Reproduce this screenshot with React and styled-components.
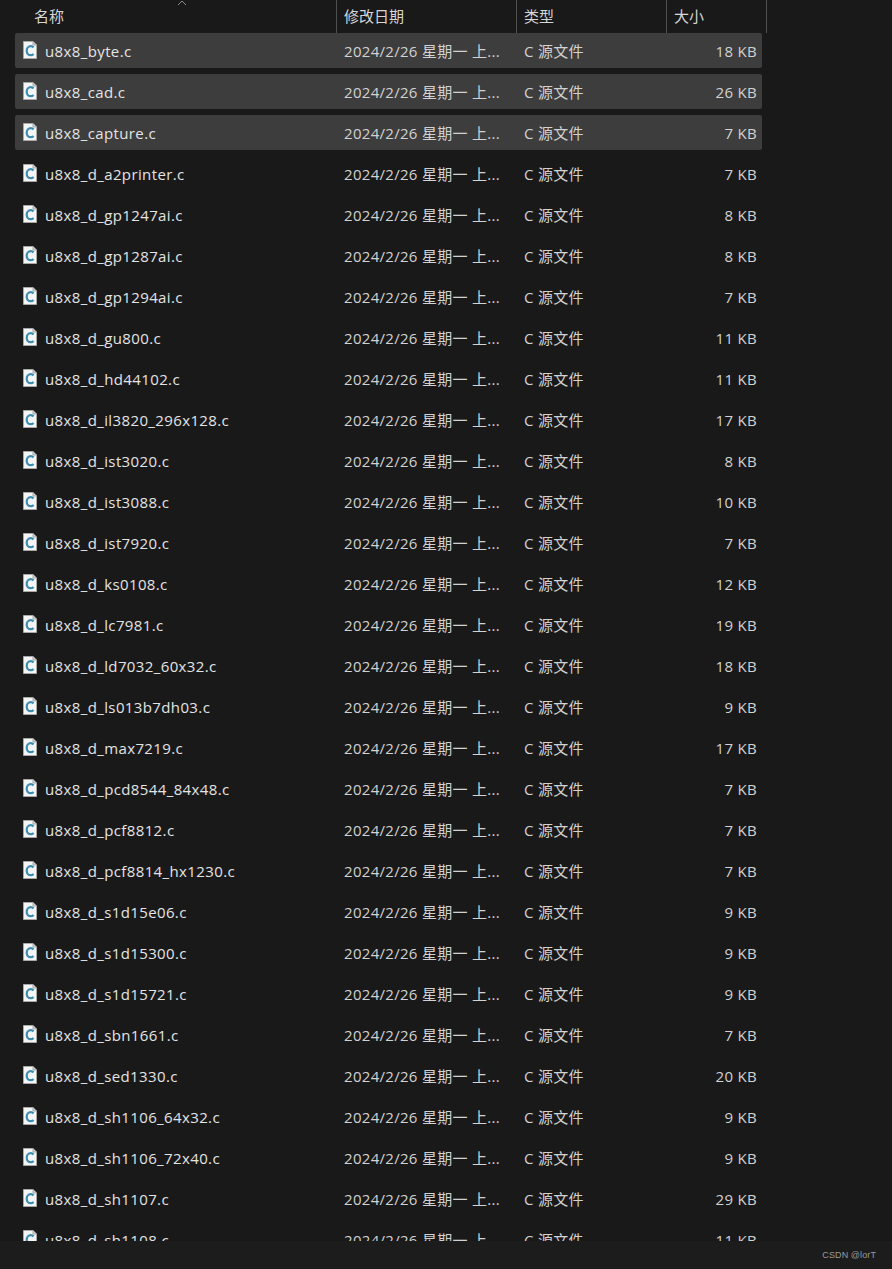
import React from "react";
import styled, { createGlobalStyle } from "styled-components";

const files = [
  ["u8x8_byte.c", "18 KB", true],
  ["u8x8_cad.c", "26 KB", true],
  ["u8x8_capture.c", "7 KB", true],
  ["u8x8_d_a2printer.c", "7 KB"],
  ["u8x8_d_gp1247ai.c", "8 KB"],
  ["u8x8_d_gp1287ai.c", "8 KB"],
  ["u8x8_d_gp1294ai.c", "7 KB"],
  ["u8x8_d_gu800.c", "11 KB"],
  ["u8x8_d_hd44102.c", "11 KB"],
  ["u8x8_d_il3820_296x128.c", "17 KB"],
  ["u8x8_d_ist3020.c", "8 KB"],
  ["u8x8_d_ist3088.c", "10 KB"],
  ["u8x8_d_ist7920.c", "7 KB"],
  ["u8x8_d_ks0108.c", "12 KB"],
  ["u8x8_d_lc7981.c", "19 KB"],
  ["u8x8_d_ld7032_60x32.c", "18 KB"],
  ["u8x8_d_ls013b7dh03.c", "9 KB"],
  ["u8x8_d_max7219.c", "17 KB"],
  ["u8x8_d_pcd8544_84x48.c", "7 KB"],
  ["u8x8_d_pcf8812.c", "7 KB"],
  ["u8x8_d_pcf8814_hx1230.c", "7 KB"],
  ["u8x8_d_s1d15e06.c", "9 KB"],
  ["u8x8_d_s1d15300.c", "9 KB"],
  ["u8x8_d_s1d15721.c", "9 KB"],
  ["u8x8_d_sbn1661.c", "7 KB"],
  ["u8x8_d_sed1330.c", "20 KB"],
  ["u8x8_d_sh1106_64x32.c", "9 KB"],
  ["u8x8_d_sh1106_72x40.c", "9 KB"],
  ["u8x8_d_sh1107.c", "29 KB"],
  ["u8x8_d_sh1108.c", "11 KB"],
];

const GlobalStyle = createGlobalStyle`
  html, body {
    margin: 0;
    padding: 0;
    background: #191919;
  }
`;

const Window = styled.div`
  width: 892px;
  height: 1269px;
  display: flex;
  flex-direction: column;
  overflow: hidden;
  background: #191919;
  color: #dcdcdc;
  font-family: "Open Sans", "Noto Sans CJK SC", sans-serif;
  font-size: 15px;
  line-height: 20px;
`;

const Explorer = styled.div`
  flex: 1;
  min-height: 0;
  overflow: hidden;
`;

const Header = styled.div`
  position: relative;
  display: grid;
  grid-template-columns: 337px 180px 150px 100px;
  height: 33px;
`;

const HeaderCell = styled.div`
  box-sizing: border-box;
  padding-left: ${(p) => p.$indent}px;
  padding-bottom: 1px;
  display: flex;
  align-items: center;
  border-right: 1px solid #505050;
  color: #d6d6d6;
`;

const SortArrow = styled.svg`
  position: absolute;
  left: 177px;
  top: 0;
`;

const Rows = styled.div`
  display: flex;
  flex-direction: column;
  gap: 6px;
  width: 747px;
  margin-left: 15px;
  letter-spacing: 0.3px;
`;

const Row = styled.div`
  display: grid;
  grid-template-columns: 322px 180px 150px 1fr;
  align-items: center;
  height: 35px;
  flex-shrink: 0;
  border-radius: 2px;
  background: ${(p) => (p.$selected ? "#3d3d3d" : "transparent")};
`;

const NameCell = styled.div`
  display: flex;
  align-items: center;
  gap: 8px;
  padding-left: 8px;
  color: #e4e4e4;
  letter-spacing: 0.38px;
`;

const Cell = styled.div`
  padding-left: 7px;
  white-space: nowrap;
  color: #d2d2d2;
`;

const SizeCell = styled.div`
  padding-right: 5px;
  text-align: right;
  white-space: nowrap;
  color: #d2d2d2;
`;

const Footer = styled.div`
  flex-shrink: 0;
  height: 28px;
  display: flex;
  align-items: center;
  justify-content: flex-end;
  padding-right: 16px;
  background: #1c1c1c;
  color: #9a9a9a;
  font-family: "Liberation Sans", sans-serif;
  font-size: 9px;
  letter-spacing: 0.1px;
`;

const FileIconBox = styled.svg`
  flex-shrink: 0;
  margin-top: -1px;
`;

const FileIcon = () => (
  <FileIconBox width="14" height="18" viewBox="0 0 14 18">
    <path d="M0.5 0.5H10L13.5 4V17.5H0.5Z" fill="#f4f6f6" stroke="#a8a8a8" />
    <path d="M10 0.5V4H13.5" fill="#d0d0d0" stroke="#a8a8a8" />
    <path
      d="M10.6 6.4C9.8 5.6 8.9 5.2 7.8 5.2C5.4 5.2 3.7 7.1 3.7 9.7C3.7 12.3 5.4 14.2 7.8 14.2C8.9 14.2 9.8 13.8 10.6 13"
      fill="none"
      stroke="#3f8cb0"
      strokeWidth="2.2"
    />
  </FileIconBox>
);

const App = () => (
  <>
    <GlobalStyle />
    <Window>
      <Explorer>
        <Header>
          <HeaderCell $indent={34}>名称</HeaderCell>
          <HeaderCell $indent={7}>修改日期</HeaderCell>
          <HeaderCell $indent={7}>类型</HeaderCell>
          <HeaderCell $indent={7}>大小</HeaderCell>
          <SortArrow width="10" height="6" viewBox="0 0 10 6">
            <path d="M1 5L5 1L9 5" fill="none" stroke="#8a8a8a" />
          </SortArrow>
        </Header>
        <Rows>
          {files.map(([name, size, selected]) => (
            <Row key={name} $selected={selected}>
              <NameCell>
                <FileIcon />
                {name}
              </NameCell>
              <Cell>2024/2/26 星期一 上...</Cell>
              <Cell>C 源文件</Cell>
              <SizeCell>{size}</SizeCell>
            </Row>
          ))}
        </Rows>
      </Explorer>
      <Footer>CSDN @lorT</Footer>
    </Window>
  </>
);

export default App;
